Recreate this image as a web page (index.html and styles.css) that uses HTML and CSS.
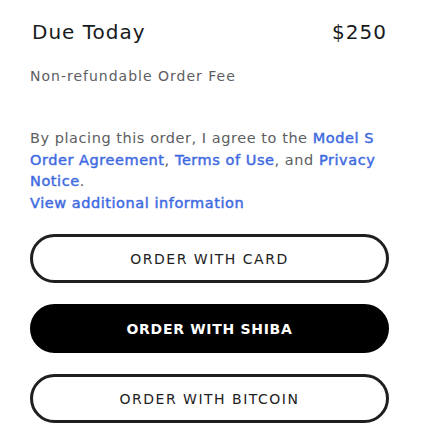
FILE: index.html
```html
<!DOCTYPE html>
<html>
<head>
<meta charset="utf-8">
<link rel="stylesheet" href="styles.css">
</head>
<body>
<div class="panel">
  <div class="due-row">
    <span class="due-label">Due Today</span>
    <span class="due-amount">$250</span>
  </div>
  <div class="fee-note">Non-refundable Order Fee</div>
  <p class="terms">By placing this order, I agree to the <a class="link">Model S Order Agreement</a>, <a class="link">Terms of Use</a>, and <a class="link">Privacy Notice</a>.<br><a class="link">View additional information</a></p>
  <div class="actions">
    <button class="btn btn-outline">ORDER WITH CARD</button>
    <button class="btn btn-solid">ORDER WITH SHIBA</button>
    <button class="btn btn-outline">ORDER WITH BITCOIN</button>
  </div>
</div>
</body>
</html>
```
FILE: styles.css
```css
html, body {
  margin: 0;
  padding: 0;
  background: #ffffff;
}
body {
  font-family: "DejaVu Sans", "Noto Sans", sans-serif;
}
.panel {
  width: 359px;
  padding: 18px 0 0 30px;
}
.due-row {
  display: flex;
  justify-content: space-between;
  align-items: baseline;
  padding-left: 2px;
  padding-right: 2px;
  font-size: 20px;
  line-height: 28px;
  letter-spacing: 1px;
  color: #171a20;
}
.fee-note {
  margin-top: 20px;
  font-size: 14px;
  line-height: 20px;
  letter-spacing: 1px;
  color: #5c5e62;
}
.terms {
  margin: 42px 0 0 0;
  font-size: 14.5px;
  line-height: 21.5px;
  letter-spacing: 0.55px;
  color: #5c5e62;
}
.link {
  color: #3e6ae1;
  font-weight: 400;
  -webkit-text-stroke: 0.45px #3e6ae1;
  text-decoration: none;
}
.actions {
  margin-top: 20px;
  display: flex;
  flex-direction: column;
  gap: 21px;
}
.btn {
  display: block;
  width: 359px;
  height: 49px;
  border-radius: 25px;
  font-family: inherit;
  font-size: 14px;
  letter-spacing: 1.5px;
  cursor: pointer;
}
.btn-outline {
  background: #ffffff;
  border: 3px solid #1f1f1f;
  color: #222222;
}
.btn-solid {
  background: #000000;
  border: 3px solid #000000;
  color: #ffffff;
  font-weight: 700;
  letter-spacing: 0.7px;
}
```
